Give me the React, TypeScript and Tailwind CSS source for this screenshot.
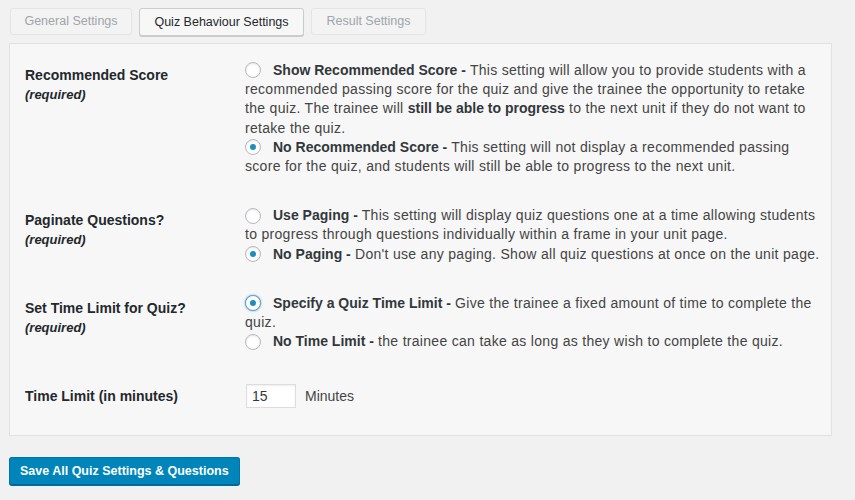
import React from "react";

const Radio = ({ checked = false, focus = false }: { checked?: boolean; focus?: boolean }) => (
  <span
    className={`inline-flex items-center justify-center align-middle relative -top-[1px] w-4 h-4 rounded-full border bg-white mr-3 ${
      focus
        ? "border-[#5b9dd9] shadow-[0_0_2px_rgba(30,140,190,0.8)]"
        : "border-[#b4b9be] shadow-[inset_0_1px_2px_rgba(0,0,0,0.1)]"
    }`}
  >
    {checked && <span className="block w-[6px] h-[6px] rounded-full bg-[#1e8cbe]" />}
  </span>
);

const Label = ({ title, required = true }: { title: string; required?: boolean }) => (
  <div className="w-[220px] shrink-0 pt-[5px] text-[#23282d]">
    <div className="text-[14px] font-bold leading-[19.2px]">{title}</div>
    {required && <div className="text-[13px] font-bold italic leading-[19.2px]">(required)</div>}
  </div>
);

const B = ({ children }: { children: React.ReactNode }) => (
  <b className="font-bold text-[#32373c] tracking-normal">{children}</b>
);

const Option = ({
  checked,
  focus,
  title,
  children,
}: {
  checked?: boolean;
  focus?: boolean;
  title: string;
  children: React.ReactNode;
}) => (
  <div className="tracking-[0.3px]">
    <Radio checked={checked} focus={focus} />
    <B>{title} -</B> {children}
  </div>
);

export default function App() {
  return (
    <div
      className="min-h-[500px] w-[855px] bg-[#f1f1f1] text-[#444]"
      style={{ fontFamily: '"Liberation Sans", Arial, sans-serif' }}
    >
      <div className="flex gap-[7px] pt-[8px] pl-[10px]">
        <div className="h-[27px] w-[122px] flex items-center justify-center rounded-[3px] border border-[#e2e4e7] bg-[#f3f3f3] text-[12.5px] text-[#a0a5aa]">
          General Settings
        </div>
        <div className="h-[28px] w-[165px] flex items-center justify-center rounded-[3px] border border-[#cccccc] bg-[#f7f7f7] shadow-[0_1px_0_#cccccc] text-[12.5px] text-[#23282d]">
          Quiz Behaviour Settings
        </div>
        <div className="h-[27px] w-[115px] flex items-center justify-center rounded-[3px] border border-[#e2e4e7] bg-[#f3f3f3] text-[12.5px] text-[#a0a5aa]">
          Result Settings
        </div>
      </div>

      <div className="ml-[9px] mt-[7px] w-[823px] border border-[#e1e1e1] bg-[#f7f7f7] pl-[15px] pt-[17px] pb-[27px] text-[14px] leading-[19.2px]">
        <div className="flex">
          <Label title="Recommended Score" />
          <div className="w-[580px]">
            <Option title="Show Recommended Score">
              This setting will allow you to provide students with a recommended passing score for the quiz
              and give the trainee the opportunity to retake the quiz. The trainee will{" "}
              <B>still be able to progress</B> to the next unit if they do not want to retake the quiz.
            </Option>
            <Option checked title="No Recommended Score">
              This setting will not display a recommended passing score for the quiz, and students will still
              be able to progress to the next unit.
            </Option>
          </div>
        </div>

        <div className="flex mt-[30px]">
          <Label title="Paginate Questions?" />
          <div className="w-[580px]">
            <Option title="Use Paging">
              This setting will display quiz questions one at a time allowing students to progress through
              questions individually within a frame in your unit page.
            </Option>
            <Option checked title="No Paging">
              Don't use any paging. Show all quiz questions at once on the unit page.
            </Option>
          </div>
        </div>

        <div className="flex mt-[30px]">
          <Label title="Set Time Limit for Quiz?" />
          <div className="w-[580px]">
            <Option checked focus title="Specify a Quiz Time Limit">
              Give the trainee a fixed amount of time to complete the quiz.
            </Option>
            <Option title="No Time Limit">
              the trainee can take as long as they wish to complete the quiz.
            </Option>
          </div>
        </div>

        <div className="flex items-center mt-[33px]">
          <div className="w-[221px] shrink-0 text-[14px] font-bold text-[#23282d]">Time Limit (in minutes)</div>
          <div className="h-[24px] w-[50px] border border-[#dddddd] bg-white shadow-[inset_0_1px_2px_rgba(0,0,0,0.07)] flex items-center pl-[5px] text-[14px] text-[#32373c]">
            15
          </div>
          <span className="ml-[9px]">Minutes</span>
        </div>
      </div>

      <button className="ml-[9px] mt-[21px] h-[28px] px-[10px] rounded-[3px] border border-[#0073aa] border-b-[#006799] bg-[#0085ba] shadow-[0_1px_0_#006799] text-white text-[12.5px] font-bold">
        Save All Quiz Settings &amp; Questions
      </button>
    </div>
  );
}
